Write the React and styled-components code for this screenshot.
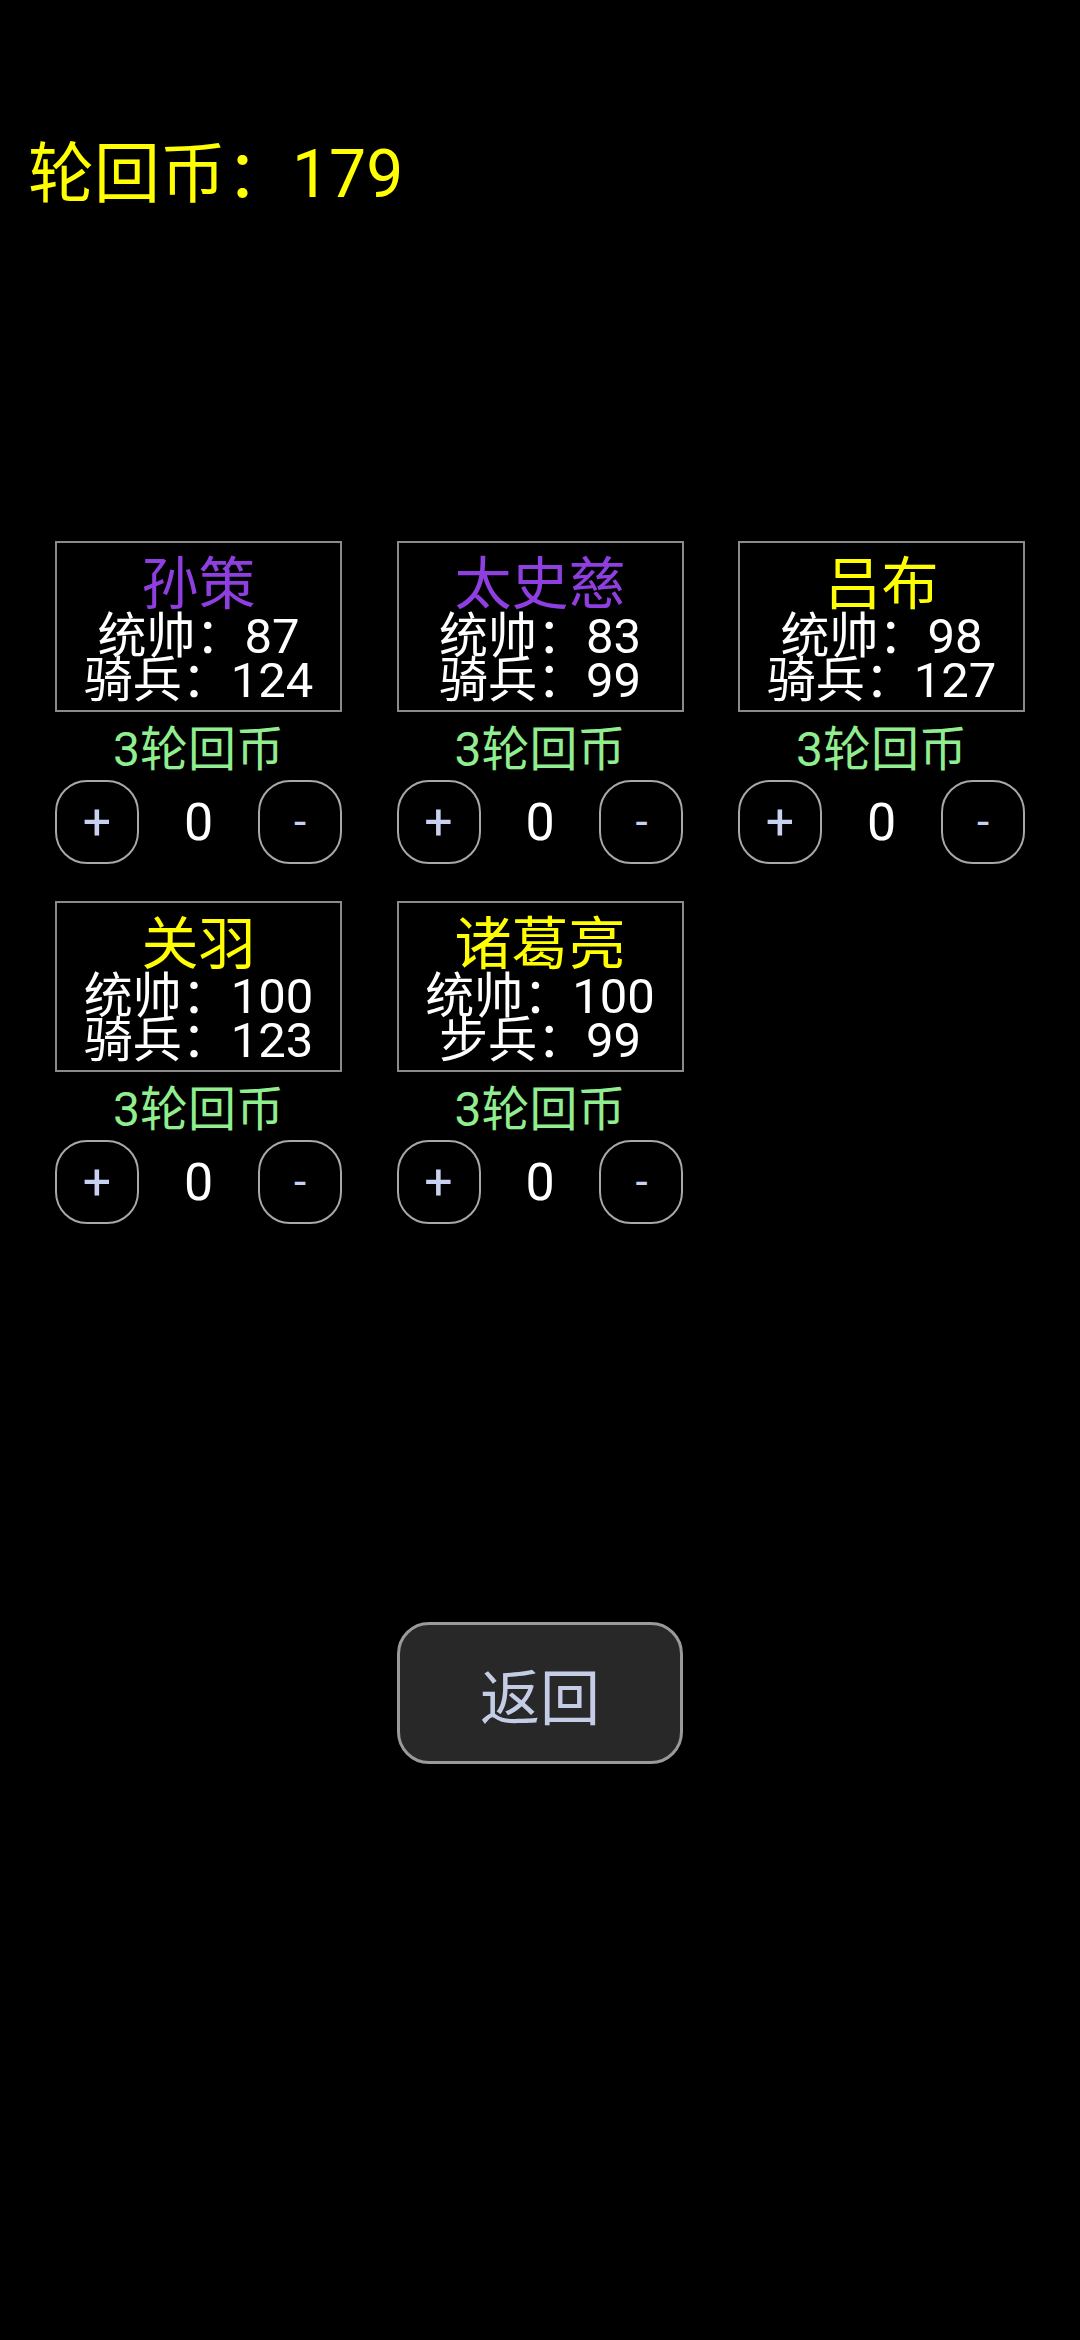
import React from 'react';
import styled, { createGlobalStyle } from 'styled-components';

const GlobalStyle = createGlobalStyle`
    html, body {
        margin: 0;
        padding: 0;
        background: #000;
    }
    body {
        font-family: Roboto, "Noto Sans CJK SC", sans-serif;
        text-spacing-trim: space-all;
    }
`;

const Page = styled.div`
    min-height: 2340px;
    padding-top: 135px;
    box-sizing: border-box;
    display: flex;
    flex-direction: column;
`;

const Coins = styled.div`
    padding-left: 28px;
    font-size: 66px;
    line-height: 80px;
    color: #ffff00;
`;

const Grid = styled.div`
    margin-top: 326px;
    padding-left: 55px;
    display: grid;
    grid-template-columns: repeat(3, 287px);
    column-gap: 54.5px;
    row-gap: 37px;
`;

const Card = styled.div`
    display: flex;
    flex-direction: column;
    align-items: center;
`;

const InfoBox = styled.div`
    width: 100%;
    box-sizing: border-box;
    border: 2px solid #8a8a8a;
    padding: 16px 0 7px;
    display: flex;
    flex-direction: column;
    align-items: center;
`;

const Name = styled.div`
    font-size: 57px;
    line-height: 52px;
    margin-bottom: 4px;
    color: ${(props) => props.$color};
`;

const Stat = styled.div`
    font-size: 49px;
    line-height: 44px;
    color: #ffffff;
    white-space: nowrap;
`;

const Cost = styled.div`
    margin-top: 13px;
    font-size: 48px;
    line-height: 50px;
    color: #90ee90;
`;

const Stepper = styled.div`
    margin-top: 5px;
    width: 100%;
    display: flex;
    align-items: center;
    justify-content: space-between;
`;

const RoundButton = styled.button`
    width: 84px;
    height: 84px;
    box-sizing: border-box;
    padding: 0;
    border: 2px solid #a8a8a8;
    border-radius: 32px;
    background: transparent;
    color: #c8d2f0;
    font-family: Roboto, "Noto Sans CJK SC", sans-serif;
    font-size: ${(props) => (props.$minus ? '44px' : '50px')};
    line-height: 1;
    display: flex;
    align-items: center;
    justify-content: center;
`;

const Count = styled.div`
    font-size: 52px;
    color: #ffffff;
`;

const BackButton = styled.button`
    align-self: center;
    margin-top: 398px;
    width: 286px;
    height: 142px;
    box-sizing: border-box;
    border: 3px solid #9a9a9a;
    border-radius: 32px;
    background: #282828;
    color: #c5cde6;
    font-family: Roboto, "Noto Sans CJK SC", sans-serif;
    font-size: 60px;
`;

const heroes = [
    { name: '孙策', color: '#8f3fe0', lead: 87, kind: '骑兵', troop: 124 },
    { name: '太史慈', color: '#8f3fe0', lead: 83, kind: '骑兵', troop: 99 },
    { name: '吕布', color: '#ffff00', lead: 98, kind: '骑兵', troop: 127 },
    { name: '关羽', color: '#ffff00', lead: 100, kind: '骑兵', troop: 123 },
    { name: '诸葛亮', color: '#ffff00', lead: 100, kind: '步兵', troop: 99 },
];

export default function App() {
    return (
        <>
            <GlobalStyle />
            <Page>
                <Coins>轮回币：179</Coins>
                <Grid>
                    {heroes.map((h) => (
                        <Card key={h.name}>
                            <InfoBox>
                                <Name $color={h.color}>{h.name}</Name>
                                <Stat>统帅：{h.lead}</Stat>
                                <Stat>
                                    {h.kind}：{h.troop}
                                </Stat>
                            </InfoBox>
                            <Cost>3轮回币</Cost>
                            <Stepper>
                                <RoundButton>+</RoundButton>
                                <Count>0</Count>
                                <RoundButton $minus>-</RoundButton>
                            </Stepper>
                        </Card>
                    ))}
                </Grid>
                <BackButton>返回</BackButton>
            </Page>
        </>
    );
}
